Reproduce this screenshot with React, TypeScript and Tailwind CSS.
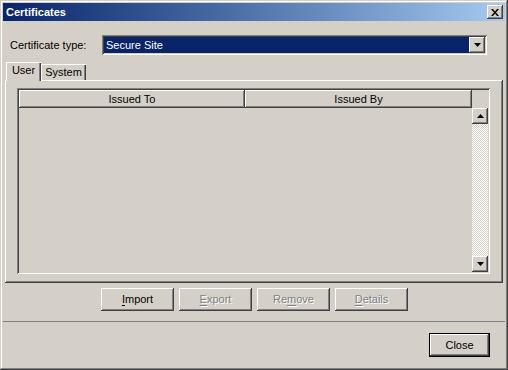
const raised =
  "shadow-[inset_-1px_-1px_#404040,inset_1px_1px_#fff,inset_-2px_-2px_#808080,inset_2px_2px_#d4d0c8]";
const sunken =
  "shadow-[inset_1px_1px_#808080,inset_-1px_-1px_#fff,inset_2px_2px_#404040,inset_-2px_-2px_#d4d0c8]";

function Arrow({ up }: { up?: boolean }) {
  return (
    <svg width="7" height="4" viewBox="0 0 7 4" className="block">
      <path d={up ? "M3.5 0L7 4H0Z" : "M0 0H7L3.5 4Z"} fill="#000" />
    </svg>
  );
}

function Button({
  label,
  mnemonic,
  disabled,
}: {
  label: string;
  mnemonic: number;
  disabled?: boolean;
}) {
  return (
    <button
      className={`flex h-[23px] w-[73px] items-center justify-center bg-[#d4d0c8] ${raised} ${
        disabled ? "text-[#808080] [text-shadow:1px_1px_0_#fff]" : "text-black"
      }`}
    >
      {label.slice(0, mnemonic)}
      <u className="underline-offset-[2px]">{label[mnemonic]}</u>
      {label.slice(mnemonic + 1)}
    </button>
  );
}

export default function App() {
  return (
    <div
      className={`flex h-[370px] w-[508px] flex-col bg-[#d4d0c8] p-[3px] font-['Liberation_Sans',Arial,sans-serif] text-[11px] text-black shadow-[inset_-1px_-1px_#404040,inset_1px_1px_#d4d0c8,inset_-2px_-2px_#808080,inset_2px_2px_#fff]`}
    >
      {/* title bar */}
      <div className="flex h-[18px] items-center justify-between bg-gradient-to-r from-[#0a246a] to-[#a6caf0] pl-[3px] pr-[2px]">
        <span className="text-[11px] font-bold text-white">Certificates</span>
        <div className={`flex h-[14px] w-[16px] items-center justify-center bg-[#d4d0c8] ${raised}`}>
          <svg width="8" height="7" viewBox="0 0 8 7">
            <path d="M0 0h2l2 2.5L6 0h2L5 3.5 8 7H6L4 4.5 2 7H0l3-3.5Z" fill="#000" />
          </svg>
        </div>
      </div>

      {/* certificate type */}
      <div className="mt-[14px] flex h-[20px] items-center">
        <span className="w-[99px] pl-[7px]">Certificate type:</span>
        <div className={`flex h-[20px] w-[385px] items-center bg-white p-[2px] ${sunken}`}>
          <div className="flex h-full flex-1 items-center bg-[#0a246a] pl-[2px] text-white">
            Secure Site
          </div>
          <div className={`flex h-[16px] w-[16px] items-center justify-center bg-[#d4d0c8] ${raised}`}>
            <Arrow />
          </div>
        </div>
      </div>

      {/* tabs */}
      <div className="mx-[2px] mt-[7px] flex flex-col">
        <div className="relative z-10 flex h-[18px] items-end">
          <div className="-mb-[1px] ml-[1px] flex h-[19px] w-[35px] items-center justify-center bg-[#d4d0c8] pb-[2px] shadow-[inset_1px_1px_#fff,inset_-1px_0_#404040,inset_-2px_0_#808080]">
            User
          </div>
          <div className="flex h-[16px] w-[45px] items-center justify-center bg-[#d4d0c8] shadow-[inset_1px_1px_#fff,inset_-1px_0_#404040,inset_-2px_0_#808080]">
            System
          </div>
        </div>
        <div className="h-[203px] pl-[12px] pr-[13px] pt-[8px] shadow-[inset_-1px_-1px_#404040,inset_1px_1px_#fff,inset_-2px_-2px_#808080]">
          <div className={`flex h-[186px] flex-col p-[2px] ${sunken}`}>
            <div className="flex h-[18px]">
              <div className={`flex w-[226px] items-center justify-center ${raised}`}>Issued To</div>
              <div className={`flex w-[227px] items-center justify-center ${raised}`}>Issued By</div>
              <div className="w-[16px]" />
            </div>
            <div className="flex flex-1">
              <div className="flex-1" />
              <div className="flex w-[16px] flex-col">
                <div className={`flex h-[16px] items-center justify-center ${raised}`}>
                  <Arrow up />
                </div>
                <div className="flex-1 bg-[repeating-conic-gradient(#fff_0%_25%,#d4d0c8_0%_50%)] bg-[length:2px_2px]" />
                <div className={`flex h-[16px] items-center justify-center ${raised}`}>
                  <Arrow />
                </div>
              </div>
            </div>
          </div>
        </div>
      </div>

      {/* action buttons */}
      <div className="mt-[5px] flex justify-center gap-[5px] pl-[1px]">
        <Button label="Import" mnemonic={0} />
        <Button label="Export" mnemonic={0} disabled />
        <Button label="Remove" mnemonic={2} disabled />
        <Button label="Details" mnemonic={0} disabled />
      </div>

      <div className="mt-[10px] h-[2px] border-t border-[#808080] border-b-white" />

      <div className="mt-[10px] flex justify-end pr-[15px]">
        <div className="border border-black">
          <button className={`flex h-[22px] w-[59px] items-center justify-center bg-[#d4d0c8] ${raised}`}>
            Close
          </button>
        </div>
      </div>
    </div>
  );
}
